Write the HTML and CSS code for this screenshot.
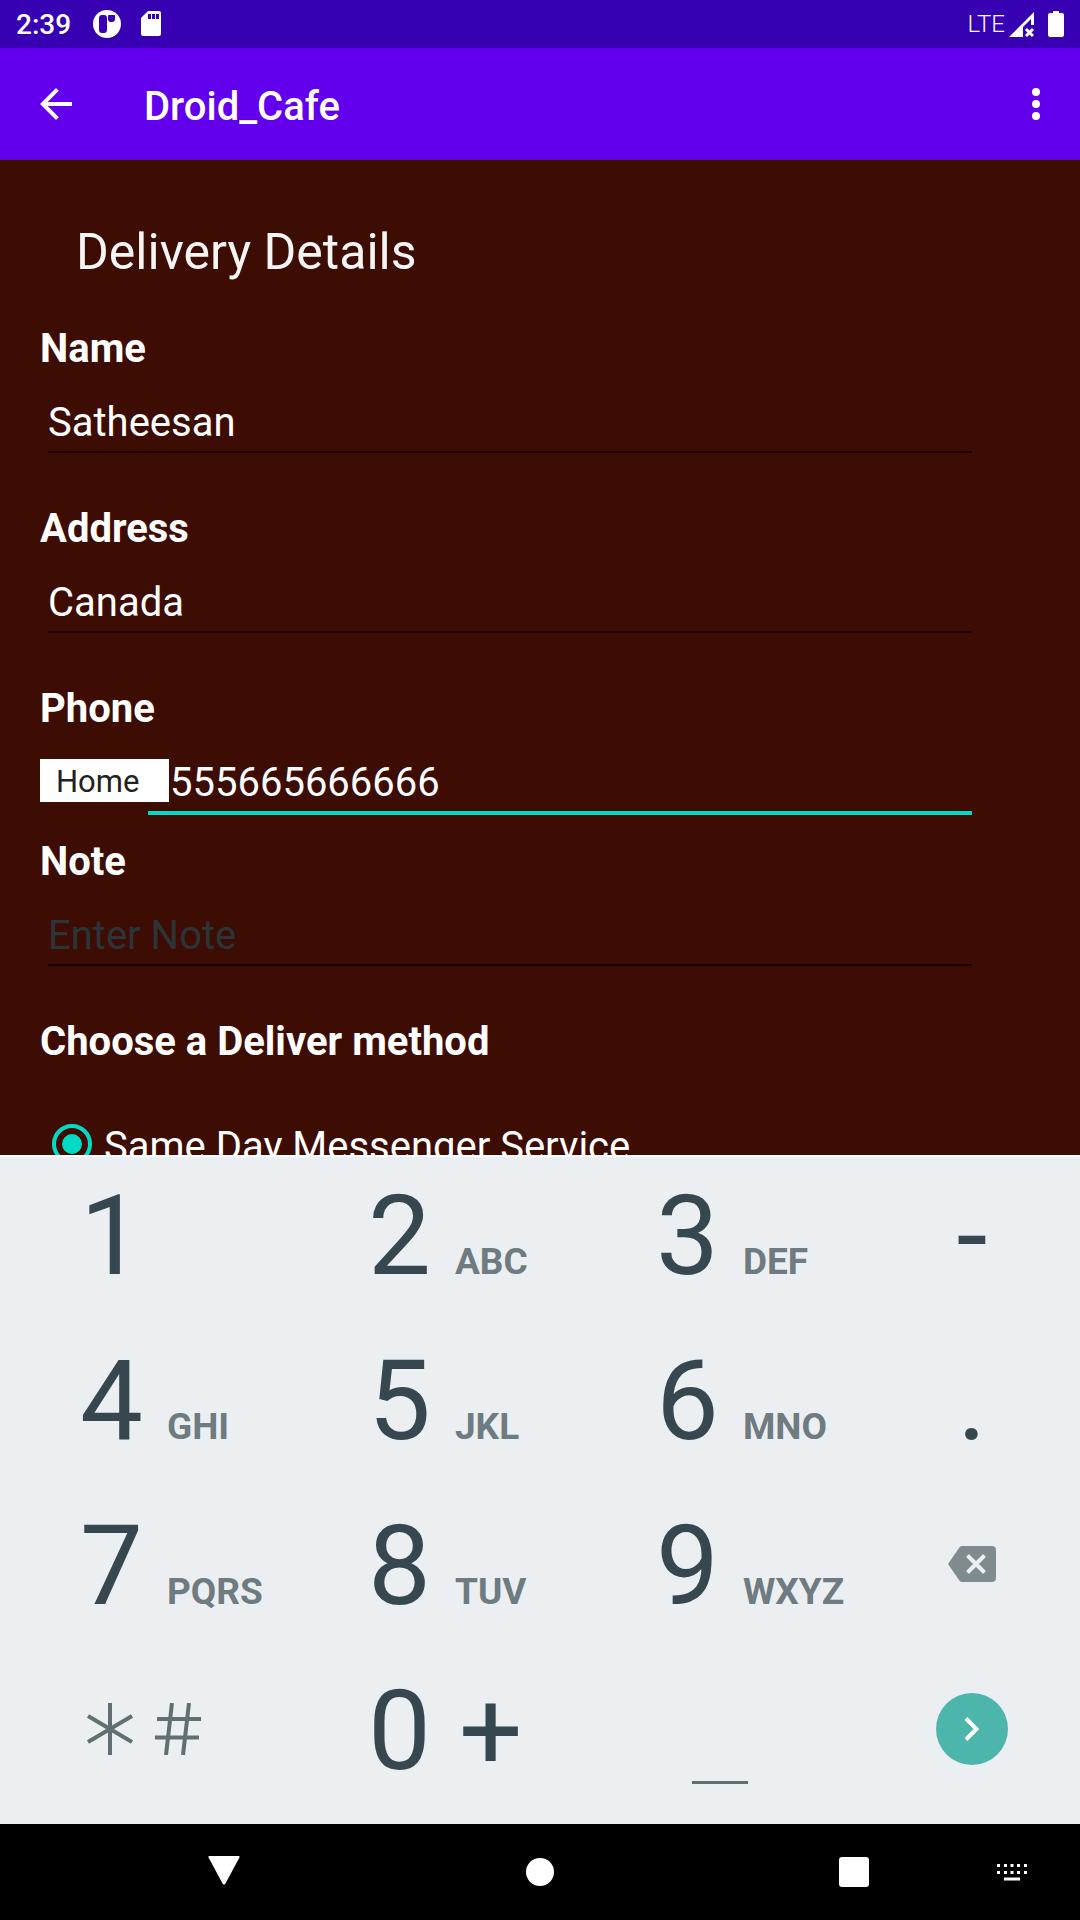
FILE: index.html
```html
<!DOCTYPE html>
<html lang="en">
<head>
<meta charset="utf-8">
<meta name="viewport" content="width=device-width, initial-scale=1">
<title>Droid_Cafe</title>
<link rel="stylesheet" href="styles.css">
</head>
<body>
<div class="status-bar">
  <div class="status-group">
    <span class="clock">2:39</span>
    <svg class="notice-icon" width="28" height="28" viewBox="0 0 28 28" aria-hidden="true"><circle cx="14" cy="14" r="14" fill="#fff"/><rect x="6" y="5" width="8" height="18" rx="3" fill="#3700b3"/><path d="M15 6q0-1 1-1h5q1 0 1 1v3a3 3 0 0 1-3 3h-1a3 3 0 0 1-3-3z" fill="#3700b3"/></svg>
    <svg width="20" height="26" viewBox="0 0 20 26" aria-hidden="true"><path d="M7 0h11a2 2 0 0 1 2 2v21a2 2 0 0 1-2 2H2a2 2 0 0 1-2-2V7z" fill="#fff"/><path d="M7 3h3v5H7zM11 3h3v5h-3zM15 3h3v5h-3z" fill="#3700b3"/></svg>
  </div>
  <div class="status-group status-right">
    <span class="network">LTE</span>
    <svg width="25" height="25" viewBox="0 0 25 25" aria-hidden="true"><path d="M0 25L25 0v13h-3V7l-8 8v10z" fill="#fff"/><path d="M17 17l7 7M24 17l-7 7" stroke="#fff" stroke-width="3"/></svg>
    <svg class="battery" width="16" height="26" viewBox="0 0 16 26" aria-hidden="true"><path d="M5 0h6v2h3a2 2 0 0 1 2 2v20a2 2 0 0 1-2 2H2a2 2 0 0 1-2-2V4a2 2 0 0 1 2-2h3z" fill="#fff"/></svg>
  </div>
</div>
<header class="app-bar">
  <button class="icon-button" type="button" aria-label="Navigate up"><svg width="48" height="48" viewBox="0 0 24 24"><path d="M20 11H7.830l5.590-5.590L12 4l-8 8 8 8 1.410-1.410L7.830 13H20v-2z" fill="#fff"/></svg></button>
  <span class="app-title">Droid_Cafe</span>
  <button class="icon-button" type="button" aria-label="More options"><svg width="48" height="48" viewBox="0 0 24 24" fill="#fff"><circle cx="12" cy="6" r="2"/><circle cx="12" cy="12" r="2"/><circle cx="12" cy="18" r="2"/></svg></button>
</header>
<main class="content">
  <h1 class="heading">Delivery Details</h1>
  <form class="form">
    <div class="field">
      <label class="label" for="name">Name</label>
      <input class="text-input" id="name" type="text" value="Satheesan">
    </div>
    <div class="field">
      <label class="label" for="address">Address</label>
      <input class="text-input" id="address" type="text" value="Canada">
    </div>
    <div class="field field-phone">
      <label class="label" for="phone">Phone</label>
      <div class="phone-row">
        <select class="phone-type" aria-label="Phone type"><option>Home</option><option>Work</option><option>Mobile</option><option>Other</option></select>
        <input class="text-input phone-input" id="phone" type="tel" value="555665666666">
      </div>
    </div>
    <div class="field">
      <label class="label" for="note">Note</label>
      <input class="text-input" id="note" type="text" placeholder="Enter Note">
    </div>
    <fieldset class="methods">
      <legend class="label">Choose a Deliver method</legend>
      <div class="option">
        <input class="radio" id="sameday" type="radio" name="method" checked>
        <label for="sameday">Same Day Messenger Service</label>
      </div>
    </fieldset>
  </form>
</main>
<section class="keyboard" aria-label="Phone keypad">
  <button class="key" type="button">1</button>
  <button class="key" type="button">2<span class="letters">ABC</span></button>
  <button class="key" type="button">3<span class="letters">DEF</span></button>
  <button class="key key-center" type="button">-</button>
  <button class="key" type="button">4<span class="letters">GHI</span></button>
  <button class="key" type="button">5<span class="letters">JKL</span></button>
  <button class="key" type="button">6<span class="letters">MNO</span></button>
  <button class="key key-center" type="button">.</button>
  <button class="key" type="button">7<span class="letters">PQRS</span></button>
  <button class="key" type="button">8<span class="letters">TUV</span></button>
  <button class="key" type="button">9<span class="letters">WXYZ</span></button>
  <button class="key key-icon" type="button" aria-label="Delete"><svg width="48" height="36" viewBox="0 0 48 36"><path d="M14 0h30a4 4 0 0 1 4 4v28a4 4 0 0 1-4 4H14q-2 0-3-2L0 18 11 2q1-2 3-2z" fill="#808b90"/><path d="M19.500 9.500l17 17M36.500 9.500l-17 17" stroke="#eceff1" stroke-width="4"/></svg></button>
  <button class="key key-symbols" type="button" aria-label="Symbols"><svg width="116" height="52" viewBox="0 0 116 52" stroke="#5f6f74" stroke-width="4" fill="none"><path d="M24 0v52M2 13l44 26M46 13L2 39M86 0l-6 52M103 0l-6 52M71 16h44M69 34.500h44"/></svg></button>
  <button class="key key-zero" type="button">0<span>+</span></button>
  <button class="key key-space" type="button" aria-label="Space"><span class="space-mark"></span></button>
  <button class="key key-icon" type="button" aria-label="Next"><span class="next"><svg width="16" height="24" viewBox="0 0 16 24"><path d="M2 1.500L12.500 12 2 22.500" fill="none" stroke="#fff" stroke-width="4"/></svg></span></button>
</section>
<nav class="nav-bar">
  <button class="nav-button" type="button" aria-label="Back"><svg width="32" height="32" viewBox="0 0 32 32"><path d="M2 1h28L16 27z" fill="#fff" stroke="#fff" stroke-width="3" stroke-linejoin="round"/></svg></button>
  <button class="nav-button" type="button" aria-label="Home"><svg width="28" height="28" viewBox="0 0 28 28"><circle cx="14" cy="14" r="14" fill="#fff"/></svg></button>
  <button class="nav-button" type="button" aria-label="Recent apps"><svg width="30" height="30" viewBox="0 0 30 30"><rect width="30" height="30" rx="3" fill="#fff"/></svg></button>
  <button class="nav-button nav-switch" type="button" aria-label="Switch keyboard"><svg width="30" height="17" viewBox="0 0 30 17" fill="#fff"><path d="M0 0h3v3H0zM7 0h3v3H7zM13.500 0h3v3h-3zM20 0h3v3h-3zM27 0h3v3h-3zM0 7h3v3H0zM7 7h3v3H7zM13.500 7h3v3h-3zM20 7h3v3h-3zM27 7h3v3h-3zM7 13.500h16v3H7z"/></svg></button>
</nav>
</body>
</html>
```
FILE: styles.css
```css
* {
  box-sizing: border-box;
}

body {
  display: flex;
  flex-direction: column;
  height: 100vh;
  margin: 0;
  font-family: Roboto, "Noto Sans", sans-serif;
  font-size: 40px;
  line-height: 47px;
  color: #fff;
  background: #3d0c02;
}

button {
  display: flex;
  align-items: center;
  justify-content: center;
  margin: 0;
  padding: 0;
  border: 0;
  background: none;
  font: inherit;
  color: inherit;
}

svg {
  display: block;
  flex: none;
}

/* System status */
.status-bar {
  display: flex;
  justify-content: space-between;
  height: 48px;
  padding: 0 16px;
  background: #3700b3;
  line-height: 48px;
}

.status-group {
  display: flex;
  align-items: center;
  gap: 20px;
}

.status-right {
  gap: 4px;
}

.clock {
  padding-top: 2px;
  font-size: 28px;
  font-weight: 500;
}

.notice-icon {
  margin-left: 2px;
}

.network {
  font-size: 24px;
  font-weight: 300;
}

.battery {
  margin-left: 10px;
}

/* App bar */
.app-bar {
  display: flex;
  align-items: center;
  height: 112px;
  padding: 0 20px 0 32px;
  background: #6200ee;
}

.app-title {
  flex: 1;
  padding: 4px 0 0 64px;
  font-weight: 500;
}

/* Delivery form */
.content {
  flex: 1;
  min-height: 0;
  padding: 63px 108px 0 40px;
  overflow: hidden auto;
  scrollbar-width: none;
}

.heading {
  margin: 0 0 43px;
  padding-left: 36px;
  font-size: 50px;
  font-weight: 400;
  line-height: 59px;
  color: #f5f5f5;
}

.field {
  margin-bottom: 52px;
}

.field-phone {
  margin-bottom: 23px;
}

.label {
  display: block;
  padding: 0;
  font-weight: 700;
}

.text-input {
  display: block;
  width: calc(100% - 8px);
  height: 81px;
  margin: 0 0 0 8px;
  padding: 27px 0 5px;
  border: 0;
  border-bottom: 2px solid #1c0501;
  border-radius: 0;
  outline: 0;
  background: none;
  font: inherit;
  color: #fff;
}

.text-input::placeholder {
  color: #2b3539;
  opacity: 1;
}

.phone-row {
  display: flex;
  align-items: flex-start;
}

.phone-type {
  position: relative;
  z-index: 1;
  width: 129px;
  height: 43px;
  margin: 27px 0 0;
  padding: 3px 16px 0;
  border: 0;
  border-radius: 0;
  appearance: none;
  background: #fff;
  font: inherit;
  font-size: 31px;
  line-height: 40px;
  color: #212121;
}

.phone-input {
  flex: 1;
  height: 83px;
  margin-left: -21px;
  padding-left: 22px;
  border-bottom: 4px solid #03dac5;
}

.methods {
  margin: 0;
  padding: 0;
  border: 0;
}

.option {
  display: flex;
  align-items: flex-start;
  gap: 12px;
  padding: 58px 0 40px 12px;
}

.radio {
  display: grid;
  place-items: center;
  flex: none;
  width: 40px;
  height: 40px;
  margin: 1px 0 0;
  border: 4px solid #03dac5;
  border-radius: 50%;
  appearance: none;
}

.radio:checked::before {
  content: "";
  width: 20px;
  height: 20px;
  border-radius: 50%;
  background: #03dac5;
}

/* Keypad */
.keyboard {
  display: grid;
  grid-template-columns: 4fr 4fr 4fr 3fr;
  grid-auto-rows: 154px;
  row-gap: 11px;
  padding-bottom: 18px;
  border-top: 2px solid #fff;
  background: #eceff1;
  color: #37474f;
}

.key {
  align-items: baseline;
  align-content: center;
  flex-wrap: wrap;
  justify-content: flex-start;
  gap: 24px;
  padding: 4px 0 0 80px;
  font-size: 112px;
  line-height: 132px;
}

.key-center {
  justify-content: center;
  padding-left: 0;
}

.letters {
  font-size: 37px;
  font-weight: 700;
  line-height: 44px;
  color: #6e7b80;
}

.key-icon {
  align-items: center;
  justify-content: center;
  padding: 0;
}

.key-symbols {
  align-items: center;
  padding: 0 0 0 86px;
}

.key-zero {
  gap: 28px;
}

.key-space {
  align-content: flex-end;
  justify-content: center;
  padding: 0 0 22px;
}

.space-mark {
  width: 56px;
  height: 3px;
  background: #5f6f74;
}

.next {
  display: grid;
  place-items: center;
  width: 72px;
  height: 72px;
  border-radius: 50%;
  background: #4db6ac;
}

/* System navigation */
.nav-bar {
  display: grid;
  grid-template-columns: 308fr 316fr 314fr 142fr;
  height: 96px;
  background: #000;
}

.nav-button {
  justify-self: end;
  width: 168px;
}

.nav-switch {
  width: 88px;
  margin-right: 24px;
}
```
